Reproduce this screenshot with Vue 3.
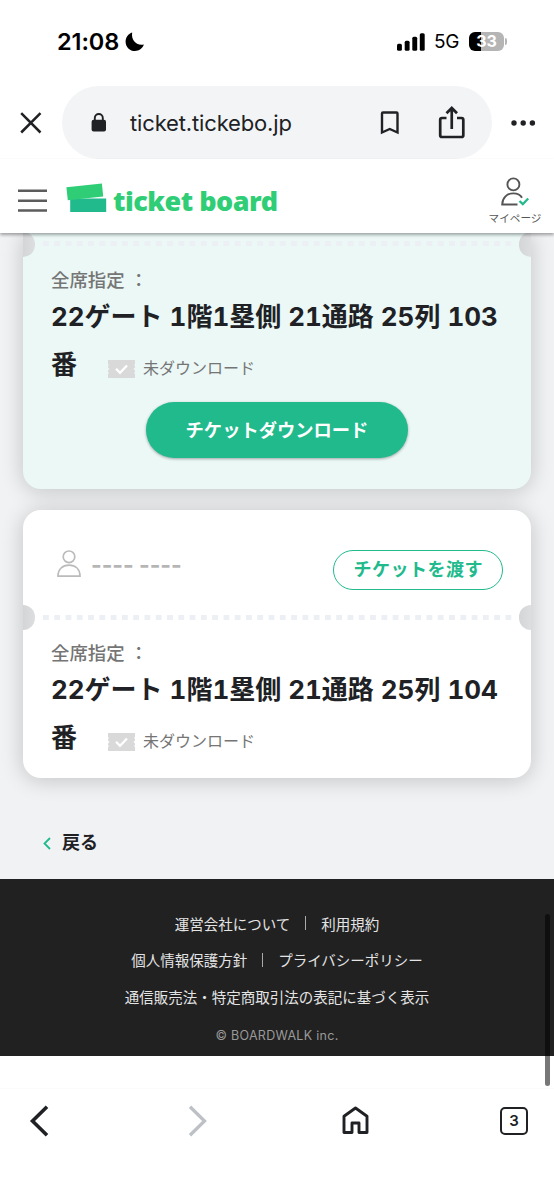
<script setup>
const tickets = [
  { number: '103', own: true },
  { number: '104', own: false },
]
const bars = [
  { x: 0, h: 7 },
  { x: 7.7, h: 10 },
  { x: 15.3, h: 14 },
  { x: 22.8, h: 17.5 },
]
const footerRows = [
  ['運営会社について', '利用規約'],
  ['個人情報保護方針', 'プライバシーポリシー'],
  ['通信販売法・特定商取引法の表記に基づく表示'],
]
</script>

<template>
  <div class="phone">
    <div class="status">
      <span class="time">21:08</span>
      <svg class="moon" width="20" height="20" viewBox="0 0 20 20"><path d="M7.2.6C5.9 7.8 11 14.1 18.9 12.6 17.4 16.6 14 19 10 19 4.800 19 .6 15 .6 9.900.6 5.400 3.200 2 7.200.6Z" fill="#000" /></svg>
      <svg class="signal" width="28" height="18" viewBox="0 0 28 18">
        <rect v-for="b in bars" :key="b.x" :x="b.x" :y="17.7 - b.h" width="4.900" :height="b.h" rx="1.500" />
      </svg>
      <span class="net">5G</span>
      <div class="battery"><span>33</span></div>
      <i class="nub"></i>
    </div>

    <div class="browser">
      <svg class="close" width="22" height="22" viewBox="0 0 22 22"><path d="M1.200 1.200 20.500 20.500M20.500 1.200 1.200 20.500" stroke="#202124" stroke-width="2.500" fill="none" /></svg>
      <div class="omnibox">
        <svg class="lock" width="16" height="19" viewBox="0 0 16 19">
          <rect x=".6" y="6.800" width="14.400" height="11.700" rx="2" fill="#202124" />
          <path d="M3.800 8V5a4 4 0 0 1 8 0v3" fill="none" stroke="#202124" stroke-width="1.900" />
        </svg>
        <span class="url">ticket.tickebo.jp</span>
        <svg class="bookmark" width="20" height="24" viewBox="0 0 20 24"><path d="M2 2.500Q2 1.500 3 1.500H16.500Q17.500 1.500 17.500 2.500V21.500L9.750 18 2 21.500Z" fill="none" stroke="#202124" stroke-width="2.400" /></svg>
        <svg class="share" width="28" height="34" viewBox="0 0 28 34"><path d="M8.500 12H4Q2.200 12 2.200 13.800V29.200Q2.200 31 4 31H23.500Q25.300 31 25.300 29.200V13.800Q25.300 12 23.500 12H19M13.750 23V2.500M8.500 7.300 13.750 2 19 7.300" fill="none" stroke="#202124" stroke-width="2.700" /></svg>
      </div>
      <svg class="more" width="26" height="6" viewBox="0 0 26 6" fill="#202124"><circle cx="3" cy="3" r="2.700" /><circle cx="12.200" cy="3" r="2.700" /><circle cx="21.400" cy="3" r="2.700" /></svg>
    </div>

    <header class="site">
      <svg class="menu" width="29" height="24" viewBox="0 0 29 24"><path d="M0 1.700H29M0 11.700H29M0 21.500H29" stroke="#5c5c5c" stroke-width="2.400" /></svg>
      <svg class="mark" width="42" height="32" viewBox="0 0 42 32">
        <path d="M4.200 15.500H40.200V29H4.200Z" fill="#20ba8d" />
        <path d="M.4 4.300 35.900.5 37.200 13.500 1.800 17.200Z" fill="#2fce76" />
      </svg>
      <span class="brand">ticket board</span>
      <div class="mypage">
        <svg width="30" height="30" viewBox="0 0 30 30" fill="none">
          <circle cx="13.400" cy="7.400" r="6" stroke="#555" stroke-width="1.900" />
          <path d="M22 20.800C20.500 18 17.500 16.400 13.400 16.400 7 16.400 2.400 20.500 2.200 27.500H17.500" stroke="#555" stroke-width="1.900" />
          <path d="M19.500 24 22.800 27.200 28.200 21.500" stroke="#20ba8d" stroke-width="2.300" />
        </svg>
        <span>マイページ</span>
      </div>
    </header>

    <main class="content">
      <section v-for="t in tickets" :key="t.number" class="ticket" :class="{ own: t.own }">
        <div v-if="!t.own" class="holder">
          <svg width="24" height="28" viewBox="0 0 24 28" fill="none" stroke="#bbb" stroke-width="1.700">
            <circle cx="12" cy="6.800" r="5.800" />
            <path d="M1 26.200C1 19 5.500 15.200 12 15.200S23 19 23 26.200Z" />
          </svg>
          <span class="dashes">---- ----</span>
          <button class="pass">チケットを渡す</button>
        </div>
        <div class="perforation"><i class="notch"></i><svg width="472" height="5"><path d="M2 2.500H471" stroke-width="5" stroke-dasharray="5.800 5.480" /></svg><i class="notch right"></i></div>
        <div class="details">
          <p class="label">全席指定 ：</p>
          <p class="seat">22ゲート 1階1塁側 21通路 25列 {{ t.number }}</p>
          <div class="line">
            <span class="seat">番</span>
            <svg class="stub" width="27" height="18" viewBox="0 0 27 18">
              <path d="M0 0H27V4L26 5 27 6V7.500L25.500 9 27 10.500V12L26 13 27 14V18H0V14L1 13 0 12V10.500L1.500 9 0 7.500V6L1 5 0 4Z" fill="#d9d9d9" />
              <path d="M8 8.800 12 12.800 19 5.500" fill="none" stroke="#fff" stroke-width="2.300" />
            </svg>
            <span class="state">未ダウンロード</span>
          </div>
        </div>
        <button v-if="t.own" class="download">チケットダウンロード</button>
      </section>
      <div class="back">
        <svg width="8" height="13" viewBox="0 0 8 13"><path d="M7 1 1.500 6.500 7 12" fill="none" stroke="#20ba8d" stroke-width="1.800" /></svg>
        <span>戻る</span>
      </div>
    </main>

    <footer class="footer">
      <div v-for="(row, r) in footerRows" :key="r" class="links">
        <template v-for="(link, i) in row" :key="link"><i v-if="i"></i><span>{{ link }}</span></template>
      </div>
      <p class="copyright">© BOARDWALK inc.</p>
    </footer>

    <nav class="bottom">
      <svg width="20" height="32" viewBox="0 0 20 32"><path d="M18 1.800 3.500 16 18 30.200" fill="none" stroke="#202124" stroke-width="3.600" /></svg>
      <svg class="forward" width="20" height="32" viewBox="0 0 20 32"><path d="M2 1.800 16.500 16 2 30.200" fill="none" stroke="#bdc1c6" stroke-width="3.300" /></svg>
      <svg class="home" width="27" height="29" viewBox="0 0 27 29"><path d="M2 10.200 13.500 2 25 10.200V26.500H17V17H10V26.500H2Z" fill="none" stroke="#202124" stroke-width="2.900" stroke-linejoin="round" /></svg>
      <span class="tabs">3</span>
    </nav>
    <i class="scrollbar"></i>
  </div>
</template>

<style>
body { margin: 0; }
</style>

<style scoped>
.phone { position: relative; width: 554px; height: 1200px; overflow: hidden; background: #fff; color: #202124; font-family: Inter, "Noto Sans CJK JP", sans-serif; display: flex; flex-direction: column; }
.phone * { box-sizing: border-box; }
p { margin: 0; }
button { font: inherit; padding: 0; }
svg { display: block; flex: none; }
.status { height: 86px; padding-left: 57px; display: flex; align-items: center; flex: none; padding-bottom: 3px; color: #000; }
.time { font-size: 23.500px; font-weight: 600; width: 68px; white-space: nowrap; letter-spacing: -.1px; }
.signal { margin-left: 252px; }
.net { font-size: 19px; width: 35px; margin-left: 9px; letter-spacing: -.2px; }
.battery { width: 35px; height: 19px; border-radius: 6px; background: linear-gradient(90deg, #000 12px, #b5b5b5 12px); color: #fff; font-size: 16px; font-weight: 700; line-height: 19px; text-align: center; }
.nub { width: 2px; height: 7px; margin-left: 1px; border-radius: 0 3px 3px 0; background: #b5b5b5; }
.browser { height: 73px; display: flex; align-items: center; flex: none; padding-left: 20px; }
.omnibox { width: 430px; height: 73px; margin-left: 20px; border-radius: 37px; background: #f3f4f6; display: flex; align-items: center; padding-left: 29px; }
.url { margin-left: 23px; width: 250px; font-size: 22px; letter-spacing: -.15px; }
.share { margin-left: 38px; }
.more { margin-left: 19px; }
.site { position: relative; z-index: 2; height: 74px; flex: none; display: flex; padding-left: 18px; background: #fff; box-shadow: 0 2px 3px #0005; }
.menu { margin-top: 30px; }
.mark { margin: 24px 0 0 19px; }
.brand { margin-left: 5px; margin-top: 22px; width: 170px; font: 900 27px/40px "Noto Sans", sans-serif; color: #2fce76; white-space: nowrap; letter-spacing: -.5px; }
.mypage { margin: 18px 0 0 199px; width: 66px; display: flex; flex-direction: column; align-items: center; font-size: 10.600px; line-height: 14px; color: #555; }
.mypage span { margin-top: 5px; white-space: nowrap; }
.content { height: 646px; flex: none; padding: 0 23px; background: #f1f2f4; }
.ticket { position: relative; height: 268px; border-radius: 18px; background: #fff; box-shadow: 0 2px 22px #0003; display: flex; flex-direction: column; }
.ticket.own { height: 256px; background: #ebf8f6; margin-bottom: 21px; border-radius: 0 0 18px 18px; }
.holder { height: 95px; padding: 40px 28px 0 34px; display: flex; }
.dashes { margin-left: 10px; margin-top: -1px; width: 243px; font-size: 23px; line-height: 32px; font-weight: 700; color: #b5b5b5; letter-spacing: -.1px; }
.pass { width: 170px; height: 40px; border: 1.500px solid #20ba8d; border-radius: 20px; background: #fff; color: #20ba8d; font-size: 18px; letter-spacing: .5px; font-weight: 600; line-height: 36px; white-space: nowrap; }
.perforation { height: 25px; display: flex; align-items: center; justify-content: space-between; overflow: hidden; flex: none; }
.own .perforation { height: 24px; align-items: flex-start; }
.own .perforation svg { margin-top: 8px; }
.perforation svg { stroke: #eceff3; }
.notch { width: 12px; height: 25px; border-radius: 0 13px 13px 0; background: linear-gradient(90deg, #d4d5d7, #dddee0); }
.own .notch { margin-top: -1px; }
.notch.right { border-radius: 13px 0 0 13px; }
.details { padding-left: 28px; }
.label { height: 38px; padding-top: 10px; font-size: 18.400px; line-height: 27px; color: #757575; font-weight: 500; white-space: pre; }
.seat { font-size: 26px; line-height: 48px; font-weight: 700; color: #202124; white-space: nowrap; font-variant-numeric: tabular-nums; }
.details > .seat { height: 48px; margin-top: -2px; }
.line { display: flex; height: 48px; align-items: center; }
.stub { margin-left: 31px; margin-top: 7px; }
.state { margin: 5px 0 0 8px; font-size: 16px; color: #757575; line-height: 24px; }
.download { align-self: center; margin-top: 13px; width: 262px; height: 56px; border: 0; border-radius: 28px; background: #20ba8d; color: #fff; font-size: 18.300px; font-weight: 600; white-space: nowrap; box-shadow: 0 1px 3px #0005; line-height: 55px; }
.back { display: flex; align-items: center; margin-top: 51px; padding-left: 20px; height: 28px; }
.back span { margin-left: 11px; font-size: 18px; line-height: 28px; font-weight: 600; }
.footer { height: 177px; flex: none; padding-top: 26px; background: #212121; color: #e4e4e4; font-size: 14.500px; }
.links { height: 36.500px; display: flex; justify-content: center; align-items: center; }
.links i { width: 1px; height: 14px; margin: 0 15px; background: #aaa; }
.copyright { text-align: center; font-size: 12.500px; line-height: 42px; color: #999; letter-spacing: .3px; }
.bottom { flex: 1; margin-top: 32px; border-top: 1px solid #fafafa; padding: 16px 0 0 29px; display: flex; align-items: flex-start; }
.forward { margin-left: 139px; }
.home { margin: 1px 0 0 134px; }
.tabs { margin: 2px 0 0 131px; width: 28px; height: 28px; border: 2.500px solid #202124; border-radius: 5px; text-align: center; font-size: 15px; line-height: 24px; font-weight: 600; }
.scrollbar { position: absolute; z-index: 4; left: 545px; top: 914px; width: 5px; height: 172px; border-radius: 3px; background: #0008; }
</style>
